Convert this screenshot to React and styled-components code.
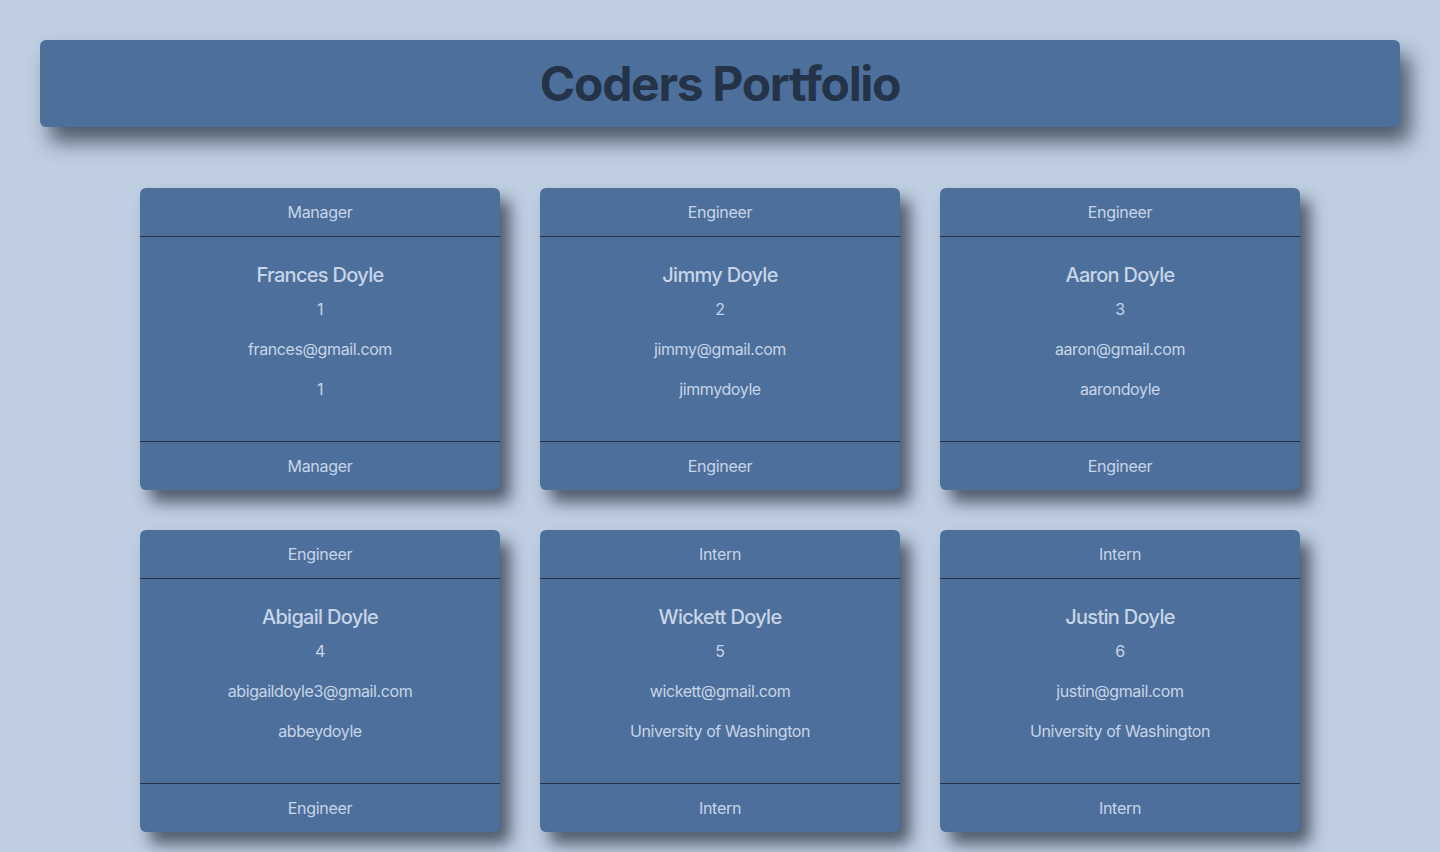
import React from "react";
import styled, { createGlobalStyle } from "styled-components";

const Global = createGlobalStyle`
  html, body { margin: 0; padding: 0; }
  body {
    background: #bfcee1;
    font-family: Inter, "Noto Sans", "Liberation Sans", sans-serif;
    color: #c7d5e8;
    min-height: 852px;
  }
  * { box-sizing: border-box; }
`;

const Page = styled.div`
  padding: 40px 40px 40px;
  display: flex;
  flex-direction: column;
  align-items: center;
`;

const Banner = styled.header`
  width: 100%;
  height: 87px;
  background: #4d6f9b;
  border-radius: 6px;
  box-shadow: 10px 15px 20px rgba(40, 52, 70, 0.75);
  display: flex;
  align-items: center;
  justify-content: center;
`;

const Title = styled.h1`
  margin: 0;
  font-size: 48px;
  font-weight: 700;
  letter-spacing: -1.3px;
  color: #243347;
`;

const Grid = styled.main`
  margin-top: 61px;
  width: 1160px;
  display: grid;
  grid-template-columns: repeat(3, 360px);
  column-gap: 40px;
  row-gap: 40px;
`;

const Card = styled.section`
  background: #4d6f9b;
  border-radius: 6px;
  box-shadow: 10px 12px 16px rgba(40, 52, 70, 0.75);
  display: flex;
  flex-direction: column;
  text-align: center;
`;

const Band = styled.div`
  height: 49px;
  line-height: 24px;
  padding: 12px 16px;
  font-size: 16px;
  letter-spacing: -0.3px;
  ${(p) => (p.$top ? "border-bottom" : "border-top")}: 1px solid #243347;
`;

const Body = styled.div`
  padding: 26px 16px 24px;
  display: flex;
  flex-direction: column;
`;

const Name = styled.h5`
  margin: 0 0 10px;
  font-size: 20px;
  font-weight: 500;
  line-height: 24px;
  letter-spacing: -0.7px;
`;

const Line = styled.p`
  margin: 0 0 16px;
  font-size: 16px;
  line-height: 24px;
  letter-spacing: -0.4px;
`;

const people = [
  { role: "Manager", name: "Frances Doyle", id: 1, email: "frances@gmail.com", extra: "1" },
  { role: "Engineer", name: "Jimmy Doyle", id: 2, email: "jimmy@gmail.com", extra: "jimmydoyle" },
  { role: "Engineer", name: "Aaron Doyle", id: 3, email: "aaron@gmail.com", extra: "aarondoyle" },
  { role: "Engineer", name: "Abigail Doyle", id: 4, email: "abigaildoyle3@gmail.com", extra: "abbeydoyle" },
  { role: "Intern", name: "Wickett Doyle", id: 5, email: "wickett@gmail.com", extra: "University of Washington" },
  { role: "Intern", name: "Justin Doyle", id: 6, email: "justin@gmail.com", extra: "University of Washington" },
];

export default function App() {
  return (
    <>
      <Global />
      <Page>
        <Banner>
          <Title>Coders Portfolio</Title>
        </Banner>
        <Grid>
          {people.map((p) => (
            <Card key={p.id}>
              <Band $top>{p.role}</Band>
              <Body>
                <Name>{p.name}</Name>
                <Line>{p.id}</Line>
                <Line>{p.email}</Line>
                <Line>{p.extra}</Line>
              </Body>
              <Band>{p.role}</Band>
            </Card>
          ))}
        </Grid>
      </Page>
    </>
  );
}
